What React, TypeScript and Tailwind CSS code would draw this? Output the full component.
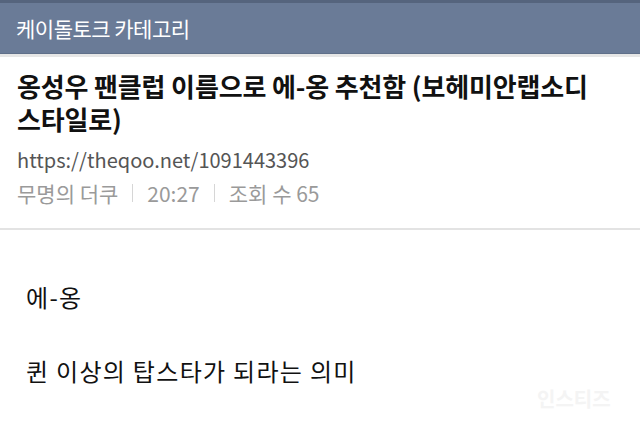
export default function App() {
  const font = { fontFamily: '"Noto Sans CJK KR", "Noto Sans", sans-serif' };
  return (
    <div className="w-[640px] h-[431px] bg-white overflow-hidden relative" style={font}>
      {/* Category bar */}
      <div className="h-[3px] bg-[#55647d]" />
      <div className="h-[51px] bg-[#6a7b97] flex items-center pl-[16px] border-b border-[#5f6f89]">
        <span className="text-[21px] text-white leading-none tracking-[-0.5px]">케이돌토크 카테고리</span>
      </div>
      <div className="h-[3px] bg-[#e6e6e6]" />

      {/* Post header */}
      <div className="pl-[17px] pt-[12px] pb-[21px] border-b-2 border-[#e3e3e3]">
        <h1 className="text-[26px] font-bold text-[#111] leading-[33px] tracking-[-0.15px]">
          <span className="block">옹성우 팬클럽 이름으로 에-옹 추천함 (보헤미안랩소디</span>
          <span className="block">스타일로)</span>
        </h1>
        <div className="mt-[11px] text-[20px] text-[#555] leading-[28px]">
          https://theqoo.net/1091443396
        </div>
        <div className="mt-[5px] flex items-center text-[21px] text-[#9a9a9a] leading-[28px]">
          <span>무명의 더쿠</span>
          <span className="mx-[14px] w-px h-[18px] bg-[#d6d6d6]" />
          <span>20:27</span>
          <span className="mx-[14px] w-px h-[18px] bg-[#d6d6d6]" />
          <span>조회 수 65</span>
        </div>
      </div>

      {/* Body */}
      <div className="pl-[26px] pt-[52px] text-[24px] text-[#111] leading-[30px] tracking-[1.3px]">
        <p>에-옹</p>
        <p className="mt-[44px]">퀸 이상의 탑스타가 되라는 의미</p>
      </div>

      {/* watermark */}
      <div className="absolute left-[537px] top-[389px] text-[20px] font-bold text-[#f4f4f4] leading-none">
        인스티즈
      </div>
    </div>
  );
}
